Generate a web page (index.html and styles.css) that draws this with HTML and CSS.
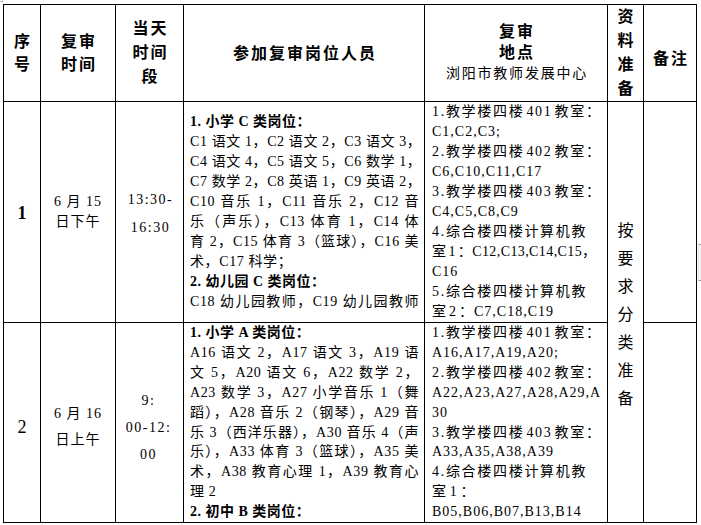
FILE: index.html
```html
<!DOCTYPE html>
<html lang="zh-CN">
<head>
<meta charset="utf-8">
<title>复审安排</title>
<link rel="stylesheet" href="styles.css">
</head>
<body>
<div class="page">
  <div class="mark-tl"></div>
  <table class="sched">
    <colgroup>
      <col class="w1"><col class="w2"><col class="w3"><col class="w4"><col class="w5"><col class="w6"><col class="w7">
    </colgroup>
    <tr class="r0">
      <th class="h c1h">序<br>号</th>
      <th class="h c2h">复审<br>时间</th>
      <th class="h c3h">当天<br>时间<br>段</th>
      <th class="h">参加复审岗位人员</th>
      <th class="h site"><div class="site-t">复审<br>地点</div><div class="site-s">浏阳市教师发展中心</div></th>
      <th class="h prep">资<br>料<br>准<br>备</th>
      <th class="h note">备注</th>
    </tr>
    <tr class="r1">
      <td class="num bold1">1</td>
      <td class="date d1">6 月 15<br>日下午</td>
      <td class="time t1">13:30-<br>16:30</td>
      <td class="list">
        <div class="ln bo">1. 小学 C 类岗位：</div>
        <div class="ln j">C1 语文 1，C2 语文 2，C3 语文 3，</div>
        <div class="ln j">C4 语文 4，C5 语文 5，C6 数学 1，</div>
        <div class="ln j">C7 数学 2，C8 英语 1，C9 英语 2，</div>
        <div class="ln j">C10 音乐 1，C11 音乐 2，C12 音</div>
        <div class="ln j">乐（声乐），C13 体育 1，C14 体</div>
        <div class="ln j">育 2，C15 体育 3（篮球），C16 美</div>
        <div class="ln">术，C17 科学；</div>
        <div class="ln bo">2. 幼儿园 C 类岗位：</div>
        <div class="ln j">C18 幼儿园教师，C19 幼儿园教师</div>
      </td>
      <td class="loc">
        <div class="ln">1.教学楼四楼<span class="n">401</span>教室：</div>
        <div class="ln lat">C1,C2,C3;</div>
        <div class="ln">2.教学楼四楼<span class="n">402</span>教室：</div>
        <div class="ln lat">C6,C10,C11,C17</div>
        <div class="ln">3.教学楼四楼<span class="n">403</span>教室：</div>
        <div class="ln lat">C4,C5,C8,C9</div>
        <div class="ln">4.综合楼四楼计算机教</div>
        <div class="ln tight">室<span class="n">1</span>：C12,C13,C14,C15，</div>
        <div class="ln lat">C16</div>
        <div class="ln">5.综合楼四楼计算机教</div>
        <div class="ln lat">室<span class="n">2</span>：C7,C18,C19</div>
      </td>
      <td class="prepc" rowspan="2">按<br>要<br>求<br>分<br>类<br>准<br>备</td>
      <td></td>
    </tr>
    <tr class="r2">
      <td class="num low">2</td>
      <td class="date d2 low">6 月 16<br>日上午</td>
      <td class="time t2 low">9:<br>00-12:<br>00</td>
      <td class="list">
        <div class="ln bo">1. 小学 A 类岗位：</div>
        <div class="ln j">A16 语文 2，A17 语文 3，A19 语</div>
        <div class="ln j">文 5，A20 语文 6，A22 数学 2，</div>
        <div class="ln j">A23 数学 3，A27 小学音乐 1（舞</div>
        <div class="ln j">蹈），A28 音乐 2（钢琴），A29 音</div>
        <div class="ln j">乐 3（西洋乐器），A30 音乐 4（声</div>
        <div class="ln j">乐），A33 体育 3（篮球），A35 美</div>
        <div class="ln j">术，A38 教育心理 1，A39 教育心</div>
        <div class="ln">理 2</div>
        <div class="ln bo">2. 初中 B 类岗位：</div>
      </td>
      <td class="loc">
        <div class="ln">1.教学楼四楼<span class="n">401</span>教室：</div>
        <div class="ln lat">A16,A17,A19,A20;</div>
        <div class="ln">2.教学楼四楼<span class="n">402</span>教室：</div>
        <div class="ln lat">A22,A23,A27,A28,A29,A</div>
        <div class="ln lat">30</div>
        <div class="ln">3.教学楼四楼<span class="n">403</span>教室：</div>
        <div class="ln lat">A33,A35,A38,A39</div>
        <div class="ln">4.综合楼四楼计算机教</div>
        <div class="ln">室<span class="n">1</span>：</div>
        <div class="ln lat">B05,B06,B07,B13,B14</div>
      </td>
      <td></td>
    </tr>
  </table>
  <div class="mark-r"></div>
</div>
</body>
</html>
```

FILE: styles.css
```css
* { box-sizing: border-box; }
html, body { margin: 0; padding: 0; background: #fff; }
body {
  font-family: "Liberation Serif", "Noto Sans CJK SC", serif;
  color: #000;
  font-size: 14px;
}
.page {
  position: relative;
  width: 701px;
  height: 525px;
  padding: 4px 0 0 3px;
  overflow: hidden;
}
.sched {
  border-collapse: collapse;
  table-layout: fixed;
  width: 694px;
}
.w1 { width: 37px; }
.w2 { width: 75px; }
.w3 { width: 68px; }
.w4 { width: 241px; }
.w5 { width: 183px; }
.w6 { width: 36px; }
.w7 { width: 53px; }
.r0 { height: 97px; }
.r1 { height: 221px; }
.r2 { height: 200px; }
.sched th, .sched td {
  border: 1px solid #000;
  padding: 0;
  vertical-align: middle;
  text-align: center;
  font-weight: normal;
}
.h {
  font-size: 16px;
  font-weight: bold !important;
  letter-spacing: 2px;
  line-height: 23px;
  padding-left: 2px !important;
}
.c3h { line-height: 24px; }
.site-t { line-height: 21px; }
.site-s {
  font-weight: normal;
  font-size: 14px;
  letter-spacing: 1.8px;
  line-height: 22px;
}
.prep { line-height: 24px; vertical-align: top !important; }
.note { padding-top: 11px !important; }
.num { font-size: 18px; }
.bold1 { font-weight: bold !important; padding-top: 3px !important; }
.date { letter-spacing: 1px; }
.d1 { line-height: 20px; }
.d2 { line-height: 26px; }
.time { letter-spacing: 1.5px; padding-left: 2px !important; }
.t1 { line-height: 28px; padding-top: 4px !important; }
.t2 { line-height: 27px; }
.t2.low { padding-right: 4px !important; }
.low { padding-top: 9px !important; }
.list, .loc { text-align: left !important; }
.list { padding: 0 5px 0 6px !important; line-height: 20px; letter-spacing: 0.6px; }
.loc { padding: 0 4px 0 7px !important; line-height: 20px; letter-spacing: 1.7px; }
.r1 .loc { vertical-align: top !important; }
.r2 .list, .r2 .loc { line-height: 19.9px; vertical-align: top !important; }
.ln { white-space: nowrap; }
.j { text-align: justify; text-align-last: justify; }
.bo { font-weight: bold; letter-spacing: 0.5px; }
.lat { letter-spacing: 1px; }
.tight { letter-spacing: 0.4px; }
.n { margin: 0 2px; }
.prepc {
  font-size: 16px;
  line-height: 28px;
  padding-left: 0;
  padding-top: 5px !important;
}
.mark-tl {
  position: absolute;
  left: 0;
  top: 0;
  width: 3px;
  height: 2px;
  border-right: 1px solid #bbb;
  border-bottom: 1px solid #bbb;
}
.mark-r {
  position: absolute;
  left: 698px;
  top: 244px;
  width: 3px;
  height: 37px;
  border-top: 1px solid #999;
  border-bottom: 1px solid #999;
  border-left: 1px solid #e4e4e4;
  background: #f7f7f7;
}
```
